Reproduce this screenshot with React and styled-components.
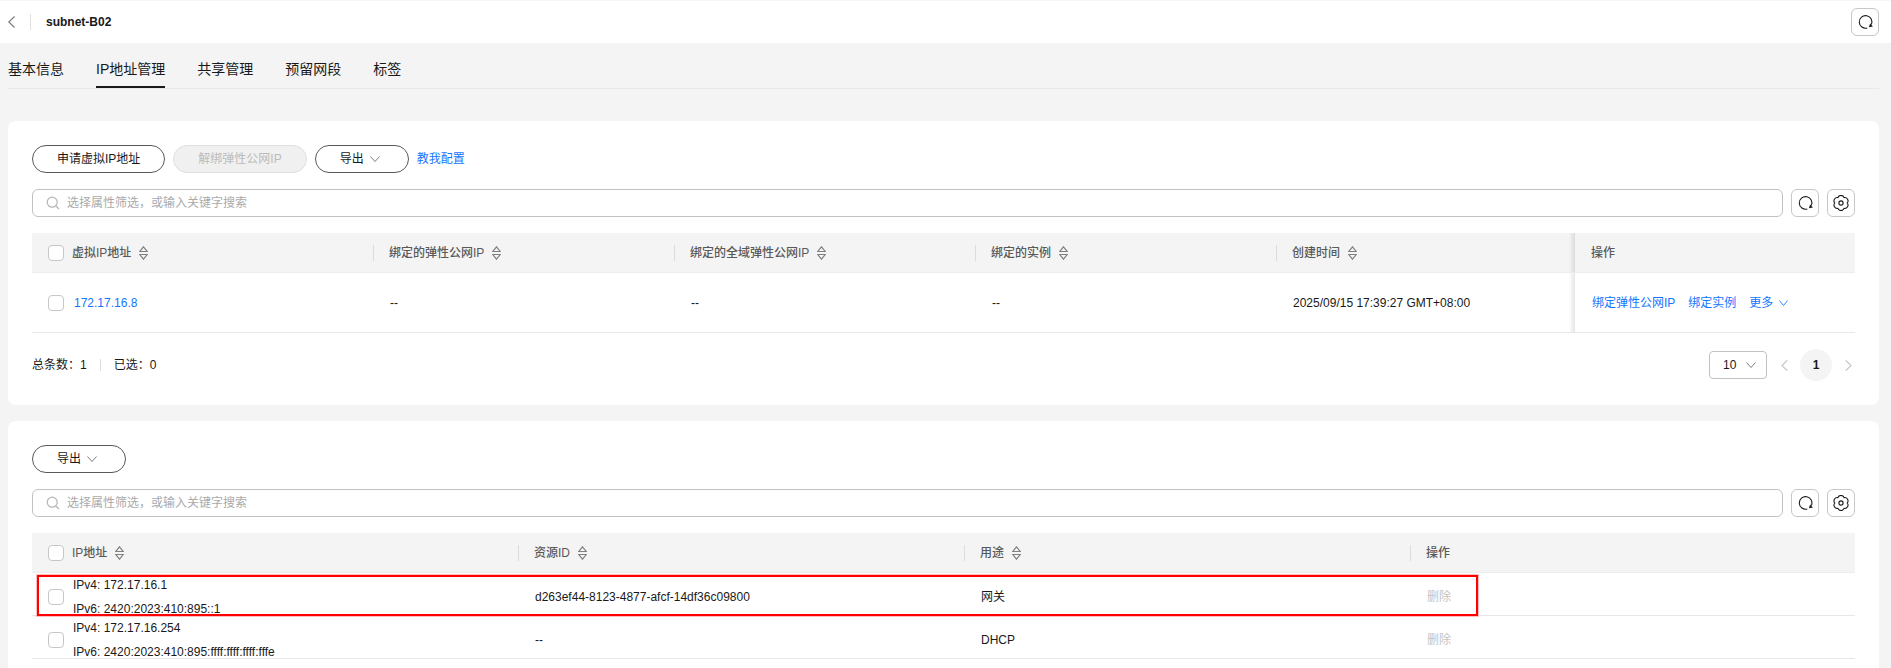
import styled, { createGlobalStyle } from "styled-components";

const GlobalStyle = createGlobalStyle`
  * {
    box-sizing: border-box;
  }
  html, body {
    margin: 0;
    height: 100%;
    overflow: hidden;
    background: #f4f4f4;
  }
  body {
    font-family: "Liberation Sans", "Noto Sans CJK SC", sans-serif;
    font-size: 12px;
    line-height: 16px;
    color: #191919;
  }
`;

const Page = styled.div`
  height: 100vh;
  overflow: hidden;
  background: #f4f4f4;
`;

const TopBar = styled.div`
  display: flex;
  align-items: center;
  height: 43px;
  padding: 0 12px 0 8px;
  background: #fff;
  box-shadow: inset 0 1px #f7f7f7;
`;

const BackButton = styled.div`
  display: flex;
  width: 7px;
`;

const TitleDivider = styled.div`
  width: 1px;
  height: 16px;
  margin: 0 15px;
  background: #dfdfdf;
`;

const Title = styled.div`
  flex: 1;
  font-weight: 700;
`;

const IconButton = styled.div`
  display: flex;
  align-items: center;
  justify-content: center;
  flex: none;
  width: 28px;
  height: 28px;
  background: #fff;
  border: 1px solid #c7c7c7;
  border-radius: 6px;
`;

const Tabs = styled.div`
  display: flex;
  gap: 32px;
  height: 46px;
  margin: 0 12px 0 8px;
  border-bottom: 1px solid #e8e8e8;
`;

const Tab = styled.div`
  height: 45px;
  padding-top: 17px;
  font-size: 14px;
  line-height: 18px;
  border-bottom: 2px solid ${(p) => (p.$active ? "#191919" : "transparent")};
`;

const Card = styled.div`
  position: relative;
  margin: ${(p) => p.$gap}px 12px 0 8px;
  padding: 24px;
  background: #fff;
  border-radius: ${(p) => (p.$last ? "8px 8px 0 0" : "8px")};
`;

const Toolbar = styled.div`
  display: flex;
  align-items: center;
  gap: 8px;
`;

const PillButton = styled.div`
  display: flex;
  align-items: center;
  gap: 6px;
  height: 28px;
  padding: ${(p) => (p.$menu ? "0 28px 0 24px" : "0 24px")};
  color: ${(p) => (p.$disabled ? "#bbb" : "#191919")};
  background: ${(p) => (p.$disabled ? "#f0f0f0" : "#fff")};
  border: 1px solid ${(p) => (p.$disabled ? "#dfdfdf" : "#595959")};
  border-radius: 14px;
`;

const TextLink = styled.span`
  color: #1476ff;
`;

const SearchRow = styled.div`
  display: flex;
  gap: 8px;
  margin: 16px 0;
`;

const SearchBox = styled.div`
  display: flex;
  align-items: center;
  gap: 7px;
  flex: 1;
  height: 28px;
  padding-left: 13px;
  color: #aaa;
  border: 1px solid #c2c2c2;
  border-radius: 6px;
`;

const TableWrap = styled.div`
  position: relative;
`;

const Row = styled.div`
  display: grid;
  grid-template-columns: ${(p) => p.$columns};
  height: ${(p) => p.$height}px;
  background: ${(p) => (p.$head ? "#f4f4f4" : "#fff")};
  border-bottom: 1px solid ${(p) => (p.$head ? "#ededed" : "#e8e8e8")};
`;

const HeadCell = styled.div`
  position: relative;
  display: flex;
  align-items: center;
  gap: 8px;
  padding: 1px 0 0 16px;
  font-weight: 500;
  color: #595959;

  &::before {
    content: "";
    display: ${(p) => (p.$first || p.$fixed ? "none" : "block")};
    position: absolute;
    left: 0;
    top: 12px;
    width: 1px;
    height: 16px;
    background: #dcdcdc;
  }
`;

const Cell = styled.div`
  position: relative;
  display: flex;
  align-items: center;
  gap: 8px;
  padding-left: 17px;
`;

const FixedShadow = styled.div`
  position: absolute;
  left: -6px;
  top: 0;
  bottom: 0;
  width: 6px;
  background: linear-gradient(to right, rgba(0, 0, 0, 0), rgba(0, 0, 0, 0.1));
`;

const Checkbox = styled.span`
  flex: none;
  width: 16px;
  height: 16px;
  margin-left: ${(p) => (p.$body ? "-1px" : "0")};
  background: #fff;
  border: 1px solid #c7c7c7;
  border-radius: 4px;
`;

const IpLink = styled(TextLink)`
  margin-left: 2px;
`;

const IpLines = styled.div`
  line-height: 24px;
  margin-left: 1px;
`;

const Disabled = styled.span`
  color: #c4c4c4;
`;

const Actions = styled.div`
  display: flex;
  align-items: center;
  gap: 13px;
  color: #1476ff;
`;

const MoreLink = styled.span`
  display: flex;
  align-items: center;
  gap: 6px;
`;

const Footer = styled.div`
  display: flex;
  align-items: center;
  justify-content: space-between;
  height: 32px;
  margin-top: 16px;
`;

const Totals = styled.div`
  display: flex;
  align-items: center;
`;

const TotalsDivider = styled.span`
  width: 1px;
  height: 12px;
  margin: 0 13px;
  background: #dcdcdc;
`;

const Pager = styled.div`
  display: flex;
  align-items: center;
  gap: 4px;
`;

const PageSize = styled.div`
  display: flex;
  align-items: center;
  justify-content: space-between;
  width: 58px;
  height: 28px;
  margin-right: 1px;
  padding: 0 10px 0 13px;
  border: 1px solid #c2c2c2;
  border-radius: 4px;
`;

const PageArrow = styled.div`
  display: flex;
  justify-content: center;
  width: 24px;
  margin-right: ${(p) => (p.$next ? "-5px" : "0")};
`;

const PageNumber = styled.div`
  display: flex;
  align-items: center;
  justify-content: center;
  width: 32px;
  height: 32px;
  font-weight: 700;
  background: #f4f4f4;
  border-radius: 50%;
`;

const RedBox = styled.div`
  position: absolute;
  left: 5px;
  top: 42px;
  width: 1441px;
  height: 41px;
  border: 2px solid #f00;
  box-shadow: 0 0 0 1px rgba(255, 0, 0, 0.25);
  pointer-events: none;
`;

const ChevronDown = ({ color = "#777", width = 10 }) => (
  <svg width={width} height="6" viewBox="0 0 11 6" fill="none" preserveAspectRatio="none">
    <path d="M0.5 0.5L5.5 5.5L10.5 0.5" stroke={color} strokeWidth="1" />
  </svg>
);

const ChevronSide = ({ left, color = "#bbb", width = 7, height = 11 }) => (
  <svg width={width} height={height} viewBox="0 0 7 12" fill="none">
    <path
      d={left ? "M6.5 0.5L0.8 6L6.5 11.5" : "M0.5 0.5L6.2 6L0.5 11.5"}
      stroke={color}
      strokeWidth="1.1"
    />
  </svg>
);

const SortIcon = () => (
  <svg width="9" height="14" viewBox="0 0 9 14" fill="none" stroke="#808080" strokeWidth="1.2">
    <path d="M4.5 0.8L8.2 5.5H0.8Z" />
    <path d="M4.5 13.2L8.2 8.5H0.8Z" />
  </svg>
);

const SearchIcon = () => (
  <svg width="14" height="14" viewBox="0 0 14 14" fill="none" stroke="#b5b5b5" strokeWidth="1.2">
    <circle cx="6.2" cy="6.2" r="5" />
    <path d="M10 10L13 13" />
  </svg>
);

const RefreshIcon = () => (
  <svg width="16" height="16" viewBox="0 0 16 16" fill="none" overflow="visible">
    <path d="M14.3 10.6A6.3 6.3 0 1 0 10.3 14" stroke="#191919" strokeWidth="1.1" />
    <path d="M15.9 12.4L11.9 13.2L13.1 9.6Z" fill="#191919" />
  </svg>
);

const GearIcon = () => (
  <svg width="16" height="16" viewBox="0 0 16 16" fill="none" stroke="#191919" strokeWidth="1.1">
    <path d="M14.2 8A3.3 3.3 0 0 0 11.1 2.6A3.3 3.3 0 0 0 4.9 2.6A3.3 3.3 0 0 0 1.8 8A3.3 3.3 0 0 0 4.9 13.4A3.3 3.3 0 0 0 11.1 13.4A3.3 3.3 0 0 0 14.2 8Z" />
    <circle cx="8" cy="8" r="2.1" />
  </svg>
);

const SearchBar = () => (
  <SearchRow>
    <SearchBox>
      <SearchIcon />
      选择属性筛选，或输入关键字搜索
    </SearchBox>
    <IconButton>
      <RefreshIcon />
    </IconButton>
    <IconButton>
      <GearIcon />
    </IconButton>
  </SearchRow>
);

const ExportButton = () => (
  <PillButton $menu>
    导出
    <ChevronDown />
  </PillButton>
);

const Sortable = ({ title, first, columnsLabel }) => (
  <HeadCell $first={first}>
    {first && <Checkbox />}
    {title}
    {!columnsLabel && <SortIcon />}
  </HeadCell>
);

const tabs = ["基本信息", "IP地址管理", "共享管理", "预留网段", "标签"];

const vipColumns = "341px 301px 301px 301px 299px 280px";
const addressColumns = "486px 446px 446px 445px";

const addresses = [
  {
    v4: "IPv4: 172.17.16.1",
    v6: "IPv6: 2420:2023:410:895::1",
    resource: "d263ef44-8123-4877-afcf-14df36c09800",
    usage: "网关",
  },
  {
    v4: "IPv4: 172.17.16.254",
    v6: "IPv6: 2420:2023:410:895:ffff:ffff:ffff:fffe",
    resource: "--",
    usage: "DHCP",
  },
];

export default function App() {
  return (
    <Page>
      <GlobalStyle />
      <TopBar>
        <BackButton>
          <ChevronSide left color="#777" height={12} />
        </BackButton>
        <TitleDivider />
        <Title>subnet-B02</Title>
        <IconButton>
          <RefreshIcon />
        </IconButton>
      </TopBar>

      <Tabs>
        {tabs.map((tab) => (
          <Tab key={tab} $active={tab === "IP地址管理"}>
            {tab}
          </Tab>
        ))}
      </Tabs>

      <Card $gap={32}>
        <Toolbar>
          <PillButton>申请虚拟IP地址</PillButton>
          <PillButton $disabled>解绑弹性公网IP</PillButton>
          <ExportButton />
          <TextLink>教我配置</TextLink>
        </Toolbar>
        <SearchBar />

        <Row $head $columns={vipColumns} $height={40}>
          <Sortable first title="虚拟IP地址" />
          <Sortable title="绑定的弹性公网IP" />
          <Sortable title="绑定的全域弹性公网IP" />
          <Sortable title="绑定的实例" />
          <Sortable title="创建时间" />
          <HeadCell $fixed>
            <FixedShadow />
            操作
          </HeadCell>
        </Row>
        <Row $columns={vipColumns} $height={60}>
          <Cell>
            <Checkbox $body />
            <IpLink>172.17.16.8</IpLink>
          </Cell>
          <Cell>--</Cell>
          <Cell>--</Cell>
          <Cell>--</Cell>
          <Cell>2025/09/15 17:39:27 GMT+08:00</Cell>
          <Cell>
            <FixedShadow />
            <Actions>
              <span>绑定弹性公网IP</span>
              <span>绑定实例</span>
              <MoreLink>
                更多
                <ChevronDown color="#1476ff" width={9} />
              </MoreLink>
            </Actions>
          </Cell>
        </Row>

        <Footer>
          <Totals>
            总条数：1
            <TotalsDivider />
            已选：0
          </Totals>
          <Pager>
            <PageSize>
              10
              <ChevronDown />
            </PageSize>
            <PageArrow>
              <ChevronSide left />
            </PageArrow>
            <PageNumber>1</PageNumber>
            <PageArrow $next>
              <ChevronSide />
            </PageArrow>
          </Pager>
        </Footer>
      </Card>

      <Card $gap={16} $last>
        <Toolbar>
          <ExportButton />
        </Toolbar>
        <SearchBar />

        <TableWrap>
          <Row $head $columns={addressColumns} $height={40}>
            <Sortable first title="IP地址" />
            <Sortable title="资源ID" />
            <Sortable title="用途" />
            <Sortable title="操作" columnsLabel />
          </Row>
          {addresses.map((item) => (
            <Row key={item.v4} $columns={addressColumns} $height={43}>
              <Cell>
                <Checkbox $body />
                <IpLines>
                  <div>{item.v4}</div>
                  <div>{item.v6}</div>
                </IpLines>
              </Cell>
              <Cell>{item.resource}</Cell>
              <Cell>{item.usage}</Cell>
              <Cell>
                <Disabled>删除</Disabled>
              </Cell>
            </Row>
          ))}
          <RedBox />
        </TableWrap>
      </Card>
    </Page>
  );
}
